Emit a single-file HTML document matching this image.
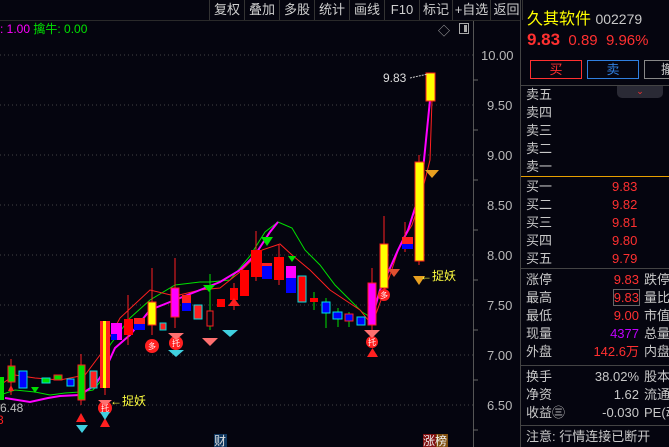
<!DOCTYPE html>
<html><head><meta charset="utf-8"><style>
*{margin:0;padding:0;box-sizing:border-box}
body{width:669px;height:447px;background:#05050f;overflow:hidden;position:relative;font-family:"Liberation Sans","Noto Sans CJK SC",sans-serif;color:#c8c8c8}
.a{position:absolute;white-space:nowrap}
.tb{position:absolute;top:0;height:20px;font-size:13px;color:#cfcfcf;line-height:20px;text-align:center;border-left:1px solid #333}
.r{font-size:13px;line-height:18px}
.red{color:#ff3030}
</style></head><body>
<div class="tb" style="left:209px;width:35px">复权</div>
<div class="tb" style="left:244px;width:35px">叠加</div>
<div class="tb" style="left:279px;width:35px">多股</div>
<div class="tb" style="left:314px;width:35px">统计</div>
<div class="tb" style="left:349px;width:35px">画线</div>
<div class="tb" style="left:384px;width:35px">F10</div>
<div class="tb" style="left:419px;width:33px">标记</div>
<div class="tb" style="left:452px;width:38px">+自选</div>
<div class="tb" style="left:490px;width:33px;border-right:1px solid #333">返回</div>
<div class="a" style="left:0;top:20px;width:520px;height:1px;background:#2a2a2a"></div>
<div class="a" style="left:0;top:21px;font-size:12px;line-height:16px"><span style="color:#ff00ff">: 1.00</span> <span style="color:#00e000">擒牛: 0.00</span></div>
<div class="a" style="left:438px;top:22px;font-size:12px;color:#aaa">◇</div>
<div class="a" style="left:459px;top:23px;width:10px;height:11px;border:1px solid #aaa"><div style="position:absolute;right:1px;top:1px;width:3px;height:7px;background:#aaa"></div></div>

<svg class="a" style="left:0;top:0" width="520" height="447">
<g stroke="#444" stroke-dasharray="1,3" stroke-width="1">
<line x1="0" y1="55" x2="473" y2="55"/><line x1="0" y1="105" x2="473" y2="105"/><line x1="0" y1="155" x2="473" y2="155"/><line x1="0" y1="205" x2="473" y2="205"/><line x1="0" y1="255" x2="473" y2="255"/><line x1="0" y1="305" x2="473" y2="305"/><line x1="0" y1="355" x2="473" y2="355"/><line x1="0" y1="405" x2="473" y2="405"/>
</g>
<line x1="473.5" y1="21" x2="473.5" y2="447" stroke="#555"/>
<g stroke="#666"><line x1="473" y1="80" x2="478" y2="80"/><line x1="473" y1="130" x2="478" y2="130"/><line x1="473" y1="180" x2="478" y2="180"/><line x1="473" y1="230" x2="478" y2="230"/><line x1="473" y1="280" x2="478" y2="280"/><line x1="473" y1="330" x2="478" y2="330"/><line x1="473" y1="380" x2="478" y2="380"/><line x1="473" y1="430" x2="478" y2="430"/></g>
<g font-size="13" fill="#b8b8b8" font-family="Liberation Sans">
<text x="481" y="60">10.00</text><text x="487" y="110">9.50</text><text x="487" y="160">9.00</text><text x="487" y="210">8.50</text><text x="487" y="260">8.00</text><text x="487" y="310">7.50</text><text x="487" y="360">7.00</text><text x="487" y="410">6.50</text>
</g>
<polyline fill="none" stroke="#00e000" stroke-width="1" points="0,395 15,390 35,392 50,395 65,393 80,392 93,390 100,382 110,345 130,318 150,300 175,285 200,282 210,282 230,280 250,256 265,232 278,222 292,228 305,250 320,265 335,285 350,300 362,312 372,318"/>
<polyline fill="none" stroke="#ff2020" stroke-width="1" points="0,385 15,375 35,378 60,380 85,375 100,355 120,318 150,290 175,296 200,290 220,288 240,272 262,250 280,244 292,255 310,270 330,290 360,310 372,325 390,275 400,245 412,225 420,200 430,160 432,100"/>
<polyline fill="none" stroke="#ff00ff" stroke-width="2" points="5,398 30,402 48,398 60,396 80,395 95,385 105,370 115,348 130,335 150,310 175,300 200,290 220,282 240,270 255,255 270,232 278,222"/>
<polyline fill="none" stroke="#ff00ff" stroke-width="2" points="370,325 380,290 390,268 398,250 408,230 416,205 422,180 426,140 430,100"/>
<g stroke="#ff2020" stroke-width="1">
<line x1="11" y1="359" x2="11" y2="395"/><line x1="81" y1="354" x2="81" y2="405"/><line x1="105" y1="321" x2="105" y2="395"/><line x1="128" y1="295" x2="128" y2="345"/><line x1="152" y1="268" x2="152" y2="335"/><line x1="175" y1="258" x2="175" y2="328"/><line x1="256" y1="231" x2="256" y2="281"/><line x1="279" y1="245" x2="279" y2="285"/><line x1="372" y1="268" x2="372" y2="330"/><line x1="384" y1="216" x2="384" y2="295"/><line x1="419" y1="155" x2="419" y2="265"/><line x1="405" y1="222" x2="405" y2="252"/><line x1="430" y1="73" x2="430" y2="101"/><line x1="234" y1="283" x2="234" y2="310"/>
</g>
<g stroke="#00e000"><line x1="314" y1="292" x2="314" y2="310"/><line x1="326" y1="298" x2="326" y2="328"/><line x1="338" y1="308" x2="338" y2="327"/><line x1="349" y1="312" x2="349" y2="327"/><line x1="210" y1="274" x2="210" y2="330"/></g>
<rect x="0" y="377" width="4" height="23" fill="#00e000"/>
<rect x="8" y="366" width="7" height="16" fill="#00e000" stroke="#ff2020"/>
<rect x="19" y="371" width="8" height="17" fill="#0000ff" stroke="#00e0e0"/>
<rect x="42" y="378" width="8" height="5" fill="#00e000" stroke="#00e0e0"/>
<rect x="54" y="375" width="8" height="5" fill="#00e000" stroke="#ff2020"/>
<rect x="67" y="379" width="7" height="7" fill="#0000ff" stroke="#00e0e0"/>
<rect x="78" y="365" width="7" height="35" fill="#00e000" stroke="#ff2020"/>
<rect x="90" y="371" width="7" height="17" fill="#ff2020" stroke="#00e0e0"/>
<rect x="100" y="321" width="10" height="67" fill="#ff2020"/><rect x="103" y="321" width="3" height="67" fill="#ffff00"/>
<rect x="111" y="323" width="11" height="17" fill="#ff00ff"/><rect x="111" y="334" width="6" height="6" fill="#0000ff"/>
<rect x="124" y="319" width="9" height="16" fill="#ff0000"/>
<rect x="134" y="318" width="11" height="6" fill="#ff2020"/><rect x="134" y="324" width="11" height="6" fill="#0000ff"/>
<rect x="148" y="302" width="8" height="23" fill="#ffff00" stroke="#ff2020"/>
<rect x="160" y="323" width="6" height="7" fill="#ff2020" stroke="#00e0e0"/>
<rect x="171" y="288" width="8" height="29" fill="#ff00ff" stroke="#ff2020"/>
<rect x="182" y="295" width="9" height="8" fill="#ff2020"/><rect x="182" y="303" width="9" height="8" fill="#0000ff"/>
<rect x="194" y="305" width="8" height="14" fill="#ff2020" stroke="#00e0e0"/>
<rect x="207" y="311" width="6" height="15" fill="#05050f" stroke="#ff2020"/>
<rect x="217" y="299" width="8" height="8" fill="#ff0000"/>
<rect x="230" y="288" width="8" height="12" fill="#ff0000"/>
<rect x="240" y="270" width="9" height="26" fill="#ff0000"/>
<rect x="251" y="250" width="11" height="27" fill="#ff0000"/>
<rect x="262" y="263" width="10" height="16" fill="#0000ff"/><rect x="262" y="263" width="10" height="3" fill="#ff2020"/>
<rect x="274" y="257" width="10" height="23" fill="#ff0000"/>
<rect x="286" y="266" width="10" height="12" fill="#ff00ff"/><rect x="286" y="278" width="10" height="15" fill="#0000ff"/>
<rect x="298" y="276" width="8" height="26" fill="#ff0000" stroke="#00e0e0"/>
<rect x="310" y="298" width="8" height="4" fill="#ff0000"/>
<rect x="322" y="302" width="8" height="11" fill="#0000ff" stroke="#00e0e0"/>
<rect x="333" y="312" width="9" height="7" fill="#0000ff" stroke="#00e0e0"/>
<rect x="345" y="314" width="8" height="7" fill="#0000ff" stroke="#ff2020"/>
<rect x="357" y="317" width="8" height="8" fill="#0000ff" stroke="#00e0e0"/>
<rect x="368" y="283" width="8" height="42" fill="#ff00ff" stroke="#ff2020"/>
<rect x="380" y="244" width="8" height="44" fill="#ffff00" stroke="#ff2020"/>
<rect x="402" y="237" width="11" height="7" fill="#ff2020"/><rect x="402" y="244" width="11" height="5" fill="#0000ff"/>
<rect x="415" y="162" width="9" height="99" fill="#ffff00" stroke="#ff2020"/>
<rect x="426" y="73" width="9" height="28" fill="#ffff00" stroke="#ff2020"/>
<g fill="#00e000"><polygon points="261,237 273,237 267,246"/><polygon points="288,256 296,256 292,262"/><polygon points="31,387 39,387 35,393"/><polygon points="203,285 215,285 209,292"/></g>
<g fill="#ff2020"><polygon points="367,357 378,357 372.5,348"/><polygon points="100,427 110,427 105,418"/><polygon points="76,422 86,422 81,413"/><polygon points="228,306 240,306 234,298"/><polygon points="8,391 14,391 11,385"/></g>
<g fill="#ff2020"><circle cx="152" cy="346" r="7"/><circle cx="176" cy="343" r="7"/><circle cx="105" cy="408" r="7"/><circle cx="384" cy="295" r="6"/><circle cx="372" cy="342" r="6"/></g>
<g font-size="8" fill="#fff" text-anchor="middle"><text x="152" y="349">多</text><text x="176" y="346">托</text><text x="105" y="411">托</text><text x="384" y="298">多</text><text x="372" y="345">托</text></g>
<g fill="#ff7070"><polygon points="168,333 184,333 176,340"/><polygon points="202,338 218,338 210,346"/><polygon points="364,330 380,330 372,338"/><polygon points="98,400 112,400 105,406"/></g>
<g fill="#40d0e0"><polygon points="168,350 184,350 176,357"/><polygon points="222,330 238,330 230,337"/><polygon points="76,425 88,425 82,433"/><polygon points="100,412 110,412 105,420"/></g>
<g fill="#e8a020"><polygon points="413,276 425,276 419,285"/><polygon points="425,170 439,170 432,178"/></g>
<g fill="#e05030"><polygon points="388,269 400,269 394,277"/></g>
<g font-size="12" fill="#ffff40" font-family="Liberation Sans,Noto Sans CJK SC"><text x="110" y="405">←捉妖</text><text x="420" y="280">←捉妖</text></g>
<text x="383" y="82" font-size="12" fill="#ddd" font-family="Liberation Sans">9.83</text>
<line x1="410" y1="78" x2="428" y2="74" stroke="#ccc" stroke-dasharray="2,1"/>
<text x="0" y="412" font-size="12" fill="#bbb" font-family="Liberation Sans">6.48</text>
<text x="-3" y="424" font-size="12" fill="#ff2020" font-family="Liberation Sans">3</text>
<rect x="214" y="434" width="13" height="13" fill="#103860"/><text x="214" y="445" font-size="12" fill="#ddd" font-family="Noto Sans CJK SC">财</text>
<rect x="423" y="434" width="13" height="13" fill="#801010"/><rect x="436" y="434" width="12" height="13" fill="#805010"/><text x="423" y="445" font-size="12" fill="#eee" font-family="Noto Sans CJK SC">涨榜</text>
</svg>

<div class="a" style="left:520px;top:0;width:1px;height:447px;background:#444"></div>
<div class="a" style="left:527px;top:5px;font-size:16px;color:#ffff00">久其软件 <span style="color:#c8c8c8;font-size:14px">002279</span></div>
<div class="a red" style="left:527px;top:30px;font-size:15px"><b style="font-size:17px">9.83</b>&nbsp; 0.89&nbsp; 9.96%</div>
<div class="a" style="left:530px;top:60px;width:52px;height:19px;border:1px solid #ff3030;color:#ff3030;font-size:13px;text-align:center;line-height:17px">买</div>
<div class="a" style="left:587px;top:60px;width:52px;height:19px;border:1px solid #3080e0;color:#3080e0;font-size:13px;text-align:center;line-height:17px">卖</div>
<div class="a" style="left:644px;top:60px;width:40px;height:19px;border:1px solid #888;color:#ccc;font-size:13px;padding-left:16px;line-height:17px">撤</div>
<div class="a" style="left:521px;top:85px;width:148px;height:1px;background:#444"></div>
<div class="a" style="left:617px;top:86px;width:46px;height:12px;background:#2a2a35;border-radius:0 0 5px 5px;color:#ff3030;font-size:9px;text-align:center;line-height:10px">⌄</div>
<div class="a r" style="left:526px;top:86px">卖五<br>卖四<br>卖三<br>卖二<br>卖一</div>
<div class="a" style="left:521px;top:176px;width:148px;height:1px;background:#e8a000"></div>
<div class="a r" style="left:526px;top:178px">买一<br>买二<br>买三<br>买四<br>买五</div>
<div class="a r red" style="left:612px;top:178px">9.83<br>9.82<br>9.81<br>9.80<br>9.79</div>
<div class="a" style="left:521px;top:268px;width:148px;height:1px;background:#444"></div>
<div class="a r" style="left:526px;top:271px">涨停<br>最高<br>最低<br>现量<br>外盘</div>
<div class="a r" style="left:606px;top:271px;text-align:right;width:33px"><span class="red">9.83</span><br><span class="red" style="outline:1px solid #666">9.83</span><br><span class="red">9.00</span><br><span style="color:#c000ff">4377</span></div>
<div class="a r red" style="left:580px;top:343px;width:59px;text-align:right">142.6万</div>
<div class="a r" style="left:644px;top:271px">跌停<br>量比<br>市值<br>总量<br>内盘</div>
<div class="a" style="left:521px;top:365px;width:148px;height:1px;background:#444"></div>
<div class="a r" style="left:526px;top:368px">换手<br>净资<br>收益㊂</div>
<div class="a r" style="left:570px;top:368px;width:69px;text-align:right">38.02%<br>1.62<br>-0.030</div>
<div class="a r" style="left:644px;top:368px">股本<br>流通<br>PE(动</div>
<div class="a" style="left:521px;top:425px;width:148px;height:1px;background:#444"></div>
<div class="a r" style="left:526px;top:428px">注意: 行情连接已断开</div>
</body></html>
